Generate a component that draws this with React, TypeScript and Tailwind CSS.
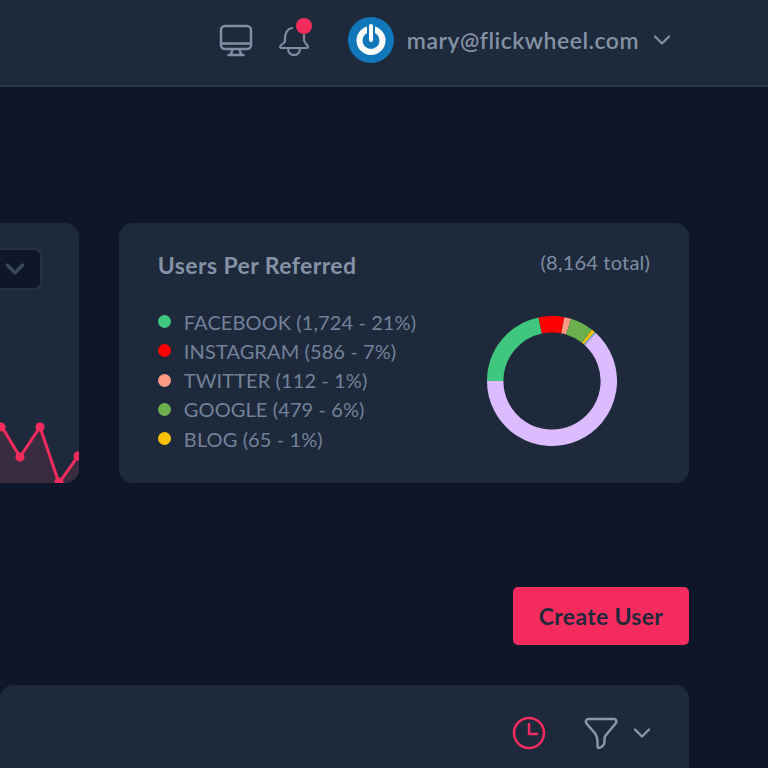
import React from "react";
import { ChevronDown } from "lucide-react";

const referrers = [
  { name: "FACEBOOK (1,724 - 21%)", color: "bg-[#3fc77f]" },
  { name: "INSTAGRAM (586 - 7%)", color: "bg-[#ff0000]" },
  { name: "TWITTER (112 - 1%)", color: "bg-[#ff9b85]" },
  { name: "GOOGLE (479 - 6%)", color: "bg-[#6cb04e]" },
  { name: "BLOG (65 - 1%)", color: "bg-[#ffc107]" },
];

// angles are clockwise from 12 o'clock
const segments = [
  { from: -90, to: -12, color: "#3fc77f" },
  { from: -12, to: 11, color: "#ff0000" },
  { from: 11, to: 17, color: "#ff9b85" },
  { from: 17, to: 38, color: "#6cb04e" },
  { from: 38, to: 41, color: "#ffc107" },
  { from: 41, to: 42.5, color: "#7fb2e5" },
  { from: 42.5, to: 270, color: "#dbbcff" },
];

function point(angle: number, r: number) {
  const a = ((angle - 90) * Math.PI) / 180;
  return `${65 + r * Math.cos(a)} ${65 + r * Math.sin(a)}`;
}

function Donut() {
  return (
    <svg width="130" height="130" viewBox="0 0 130 130">
      {segments.map((s) => (
        <path
          key={s.from}
          d={`M ${point(s.from, 56.8)} A 56.8 56.8 0 ${s.to - s.from > 180 ? 1 : 0} 1 ${point(s.to, 56.8)}`}
          fill="none"
          stroke={s.color}
          strokeWidth="16.4"
        />
      ))}
    </svg>
  );
}

function Header() {
  return (
    <header className="h-[87px] shrink-0 bg-[#1e293b] border-b-2 border-[#2c394d] flex items-center justify-end pr-[92px] pb-[5px]">
      <svg width="34" height="33" viewBox="0 0 34 33" fill="none" stroke="#7f8ea3" strokeWidth="2.500" strokeLinecap="round" strokeLinejoin="round" className="mr-[26px]">
        <rect x="2" y="2" width="30" height="23" rx="4" />
        <path d="M2 19.500h30M13.500 25l-1.500 5.500M20.500 25l1.500 5.500M9.500 31h15" />
      </svg>
      <div className="relative w-[30px] h-[30px] mr-[39px] mt-[2px]">
        <svg width="30" height="30" viewBox="0 0 30 30" fill="none" stroke="#7f8ea3" strokeWidth="2.200" strokeLinecap="round" strokeLinejoin="round">
          <path d="M13 2C8 3 6 8 6 13v2c0 2-5 4-5 6 0 1 1 1 2 1h24c1 0 2 0 2-1 0-2-4-4-4-7V9" />
          <path d="M9 22c0 5 3 7 6 7s6-2 6-7" />
        </svg>
        <span className="absolute top-[-8px] right-[-3px] w-[16px] h-[16px] rounded-full bg-[#f42c5e]" />
      </div>
      <svg width="46" height="46" viewBox="0 0 46 46" className="mr-[13px]">
        <circle cx="23" cy="23" r="23" fill="#1077bb" />
        <circle cx="23" cy="23.500" r="11.500" fill="none" stroke="#ffffff" strokeWidth="6" />
        <path d="M23 5v17" stroke="#1077bb" strokeWidth="8" />
        <path d="M23 9v14" stroke="#ffffff" strokeWidth="4" strokeLinecap="round" />
      </svg>
      <span className="text-[23px] tracking-[0.5px] font-semibold text-[#8492a6] leading-none">mary@flickwheel.com</span>
      <ChevronDown className="w-[28px] h-[28px] text-[#7f8ea3] ml-[9px]" strokeWidth={2} />
    </header>
  );
}

function TrendCard() {
  return (
    <div className="w-[79px] h-[260px] bg-[#1e293b] rounded-r-[14px] overflow-hidden flex flex-col justify-between">
      <div className="w-[42px] h-[42px] mt-[25px] bg-[#0d1729] border-2 border-l-0 border-[#263244] rounded-r-[8px] flex items-center justify-start">
        <ChevronDown className="w-[30px] h-[30px] text-[#3b4658]" strokeWidth={3} />
      </div>
      <svg width="79" height="70" viewBox="0 0 79 70">
        <path d="M0 12L2 14L20 44L40 14L59 70L78 43L79 42V70H0Z" fill="#382c3e" />
        <path d="M-3 10L2 14L20 44L40 14L59 70L78 43" fill="none" stroke="#f42c5e" strokeWidth="3" />
        <circle cx="1" cy="14" r="4.500" fill="#f42c5e" />
        <circle cx="20" cy="44" r="4.500" fill="#f42c5e" />
        <circle cx="40" cy="14" r="4.500" fill="#f42c5e" />
        <circle cx="59" cy="69" r="4.500" fill="#f42c5e" />
        <circle cx="78" cy="43" r="4.500" fill="#f42c5e" />
      </svg>
    </div>
  );
}

function ReferredCard() {
  return (
    <div className="w-[571px] h-[260px] bg-[#1e293b] rounded-[14px] px-[39px] pt-[27px] flex flex-col">
      <div className="flex justify-between items-start">
        <h2 className="text-[23px] tracking-[0.4px] font-bold text-[#8492a6] leading-[30px]">Users Per Referred</h2>
        <span className="text-[20px] tracking-[0.2px] text-[#7f8ea3] leading-[24px]">(8,164 total)</span>
      </div>
      <div className="flex justify-between items-start mt-[-4px]">
        <ul className="flex flex-col mt-[31px]">
          {referrers.map((r) => (
            <li key={r.name} className="h-[29.25px] flex items-center gap-[13px]">
              <span className={`w-[13px] h-[13px] rounded-full ${r.color}`} />
              <span className="text-[20px] tracking-[0.1px] text-[#73829a] leading-none">{r.name}</span>
            </li>
          ))}
        </ul>
        <div className="mt-[40px] mr-[33px]">
          <Donut />
        </div>
      </div>
    </div>
  );
}

export default function App() {
  return (
    <div className="h-[768px] w-[768px] overflow-hidden bg-[#0d1729] flex flex-col font-['Lato',sans-serif]">
      <Header />
      <main className="flex-1 pr-[79px] pt-[136px] flex flex-col">
        <div className="flex gap-[40px]">
          <TrendCard />
          <ReferredCard />
        </div>
        <div className="flex justify-end mt-[104px]">
          <button className="w-[176px] h-[58px] rounded-[5px] bg-[#f42c5e] text-[#1e293b] text-[23px] tracking-[0.3px] font-bold">Create User</button>
        </div>
        <div className="mt-[40px] flex-1 bg-[#1e293b] rounded-t-[14px] flex items-start justify-end pr-[33px] pt-[31px]">
          <svg width="34" height="34" viewBox="0 0 34 34" fill="none" stroke="#f42c5e" strokeWidth="2.500" strokeLinecap="round" strokeLinejoin="round" className="mr-[38px]">
            <circle cx="17" cy="17" r="15" />
            <path d="M17 8v10h8" />
          </svg>
          <svg width="34" height="34" viewBox="0 0 34 34" fill="none" stroke="#8a98ab" strokeWidth="2.500" strokeLinecap="round" strokeLinejoin="round">
            <path d="M4 3h26c2 0 3 2 2 4L22 19c-1 1-1.500 2-1.500 4 0 2 0 4-.5 5-.5 2-4 4-5.500 4-1 0-1-2-1-6 0-4 0-5-2-8L3 8C1 6 2 3 4 3Z" />
          </svg>
          <ChevronDown className="w-[28px] h-[28px] text-[#8a98ab] ml-[10px] mt-[3px]" strokeWidth={2} />
        </div>
      </main>
    </div>
  );
}
